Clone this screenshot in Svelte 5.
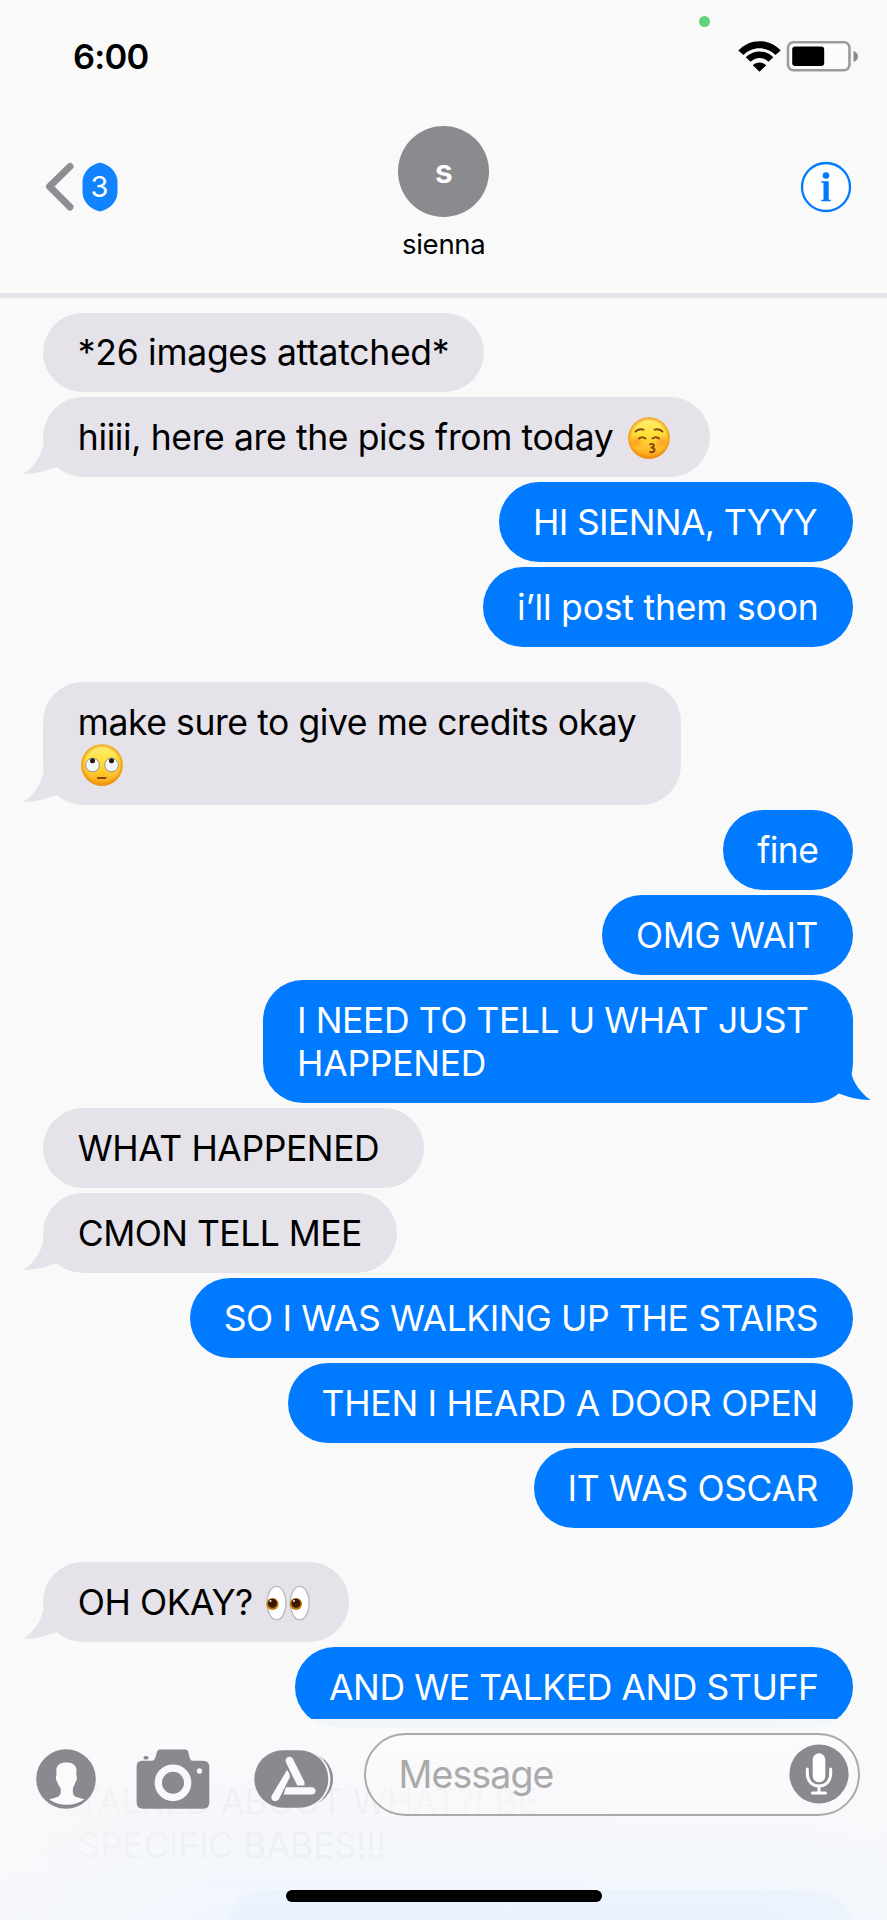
<script>
  const messages = [
    { from: 'them', width: 440.4, lines: [['*26 images attatched*', 371.5]] },
    { from: 'them', width: 666.7, lines: [['hiiii, here are the pics from today', 535.5]], emoji: 'kiss', tail: true },
    { from: 'me', width: 353.7, lines: [['HI SIENNA, TYYY', 284]] },
    { from: 'me', width: 369.7, lines: [['i’ll post them soon', 301.5]] },
    { from: 'them', width: 637.6, lines: [['make sure to give me credits okay', 558.5], ['', 0]], emoji: 'roll', tail: true, gap: true },
    { from: 'me', width: 129.4, lines: [['fine', 61]] },
    { from: 'me', width: 250.7, lines: [['OMG WAIT', 182]] },
    { from: 'me', width: 589.6, lines: [['I NEED TO TELL U WHAT JUST', 511.5], ['HAPPENED', 189]], tail: true },
    { from: 'them', width: 380.4, lines: [['WHAT HAPPENED', 301.5]] },
    { from: 'them', width: 353.9, lines: [['CMON TELL MEE', 284]], tail: true },
    { from: 'me', width: 663, lines: [['SO I WAS WALKING UP THE STAIRS', 594.5]] },
    { from: 'me', width: 565.2, lines: [['THEN I HEARD A DOOR OPEN', 496.5]] },
    { from: 'me', width: 319.2, lines: [['IT WAS OSCAR', 250.5]] },
    { from: 'them', width: 306, lines: [['OH OKAY?', 175]], emoji: 'eyes', tail: true, gap: true },
    { from: 'me', width: 557.7, lines: [['AND WE TALKED AND STUFF', 489.5]] },
    { from: 'them', width: 570, lines: [['TALKED ABOUT WHAT?! BE', 460], ['SPECIFIC BABES!!!', 308]], gap: true },
    { from: 'me', width: 626.7, lines: [['', 0]] },
  ];

  // Tracks a line of text so that it fills the given width.
  function fit(node, width) {
    const count = node.textContent.length;
    if (!count) return;
    const natural = node.getBoundingClientRect().width;
    node.style.letterSpacing = `${(width - natural) / count}px`;
  }
</script>

<div class="phone">
  <header>
    <div class="camera-dot"></div>
    <div class="status">
      <span class="time" use:fit={75.5}>6:00</span>
      <div class="indicators">
        <svg width="43" height="31" viewBox="0 0 43 31">
          <path d="M.3 9.6C12-3 31-3 42.7 9.6L37.5 14C29 5 14 5 5.500 14Z" />
          <path d="M7.700 16.200C15.500 8.500 27.500 8.500 35.300 16.200L30.400 20.700C25.500 15.600 17.500 15.600 12.600 20.700Z" />
          <path d="M14.800 24.200C18.500 20.700 24.500 20.700 28.200 24.200L21.500 30.800Z" />
        </svg>
        <svg width="73" height="31" viewBox="0 0 73 31">
          <rect x="2" y="1.300" width="61.500" height="28" rx="5.500" fill="#fcfcfc" stroke="#9b9b9b" stroke-width="2.600" />
          <rect x="6.200" y="5.500" width="32" height="19.400" rx="3" />
          <path d="M67.500 9.700Q72 12 72 15.500T67.500 21Z" fill="#8a8a8a" />
        </svg>
      </div>
    </div>
    <div class="nav">
      <div class="back">
        <svg width="29" height="50" viewBox="0 0 29 50">
          <path d="M25 4.500L4.500 24.500L25 45" fill="none" stroke="#8e8d93" stroke-width="7" stroke-linecap="round" stroke-linejoin="round" />
        </svg>
        <div class="unread">
          <svg width="36" height="50" viewBox="0 0 36 50">
            <path d="M18 .5C29 3.500 35.500 11 35.500 20V30C35.500 39 29 46.500 18 49.500C7 46.500.5 39 .5 30V20C.5 11 7 3.500 18 .5Z" fill="#1283ff" />
          </svg>
          <span>3</span>
        </div>
      </div>
      <div class="contact">
        <div class="avatar">s</div>
        <div class="name"><span use:fit={83.500}>sienna</span></div>
      </div>
      <svg class="info" width="52" height="52" viewBox="0 0 52 52">
        <circle cx="26" cy="26" r="24" fill="#fdfdfd" stroke="#007aff" stroke-width="2.300" />
        <circle cx="26" cy="14.500" r="3.300" fill="#007aff" />
        <path d="M21.300 20.300H28.700V38.700H30.700V40.200H21.300V38.700H23.500V21.800H21.300Z" fill="#007aff" />
      </svg>
    </div>
  </header>

  <main>
    {#each messages as m}
      <div class="bubble {m.from}" class:gap={m.gap} style:width="{m.width}px">
        {#each m.lines as [text, width], i}
          <div class="line">
            <span use:fit={width}>{text}</span>
            {#if m.emoji && i === m.lines.length - 1}
              {#if m.emoji === 'eyes'}
                <svg class="emoji eyes" width="44" height="36" viewBox="0 0 44 36">
                  <g fill="#fff" stroke="#bcbabd" stroke-width="1.300">
                    <ellipse cx="10.500" cy="18" rx="9.500" ry="16.700" />
                    <ellipse cx="33.700" cy="18" rx="9.500" ry="16.700" />
                  </g>
                  <g fill="#b97a08"><circle cx="6.500" cy="19" r="6.100" /><circle cx="30" cy="19" r="6.100" /></g>
                  <g fill="#3a1700"><circle cx="6.500" cy="18.200" r="4.500" /><circle cx="30" cy="18.200" r="4.500" /></g>
                  <g fill="#fff"><circle cx="4.500" cy="16" r="1" /><circle cx="28" cy="16" r="1" /></g>
                </svg>
              {:else}
                <svg class="emoji {m.emoji}" width="42" height="42" viewBox="0 0 42 42">
                  <defs>
                    <linearGradient id="face-{m.emoji}" x1="0" y1="0" x2="0" y2="1">
                      <stop offset="0" stop-color="#ffef7a" />
                      <stop offset=".4" stop-color="#ffe03a" />
                      <stop offset=".75" stop-color="#ffc12a" />
                      <stop offset="1" stop-color="#f59a12" />
                    </linearGradient>
                    <radialGradient id="rim-{m.emoji}">
                      <stop offset=".8" stop-color="#ee8b10" stop-opacity="0" />
                      <stop offset="1" stop-color="#e98509" stop-opacity=".8" />
                    </radialGradient>
                    <radialGradient id="blush-{m.emoji}">
                      <stop offset="0" stop-color="#ff7a1c" stop-opacity=".6" />
                      <stop offset="1" stop-color="#ff7a1c" stop-opacity="0" />
                    </radialGradient>
                  </defs>
                  <circle cx="21" cy="21" r="20.800" fill="url(#face-{m.emoji})" />
                  <circle cx="21" cy="21" r="20.800" fill="url(#rim-{m.emoji})" />
                  {#if m.emoji === 'kiss'}
                    <circle cx="8" cy="25" r="7.500" fill="url(#blush-kiss)" />
                    <circle cx="34" cy="25" r="7.500" fill="url(#blush-kiss)" />
                    <g fill="none" stroke="#85480a" stroke-width="1.900" stroke-linecap="round" stroke-linejoin="round">
                      <path d="M7.500 14.500Q11 11.300 15.500 12.700M26.500 12.700Q31 11.300 34.500 14.500" />
                      <path d="M11 21.500Q14 18.800 17.500 21.500M24.500 21.500Q28 18.800 31 21.500" />
                      <path d="M22 27.300C25.500 26 28 29 23.500 30.500C29 31.500 26.500 36 22 35" />
                    </g>
                  {:else}
                    <g fill="#f7f8fa" stroke="#8c9299" stroke-width="1">
                      <circle cx="11.500" cy="21" r="6.800" /><circle cx="30.500" cy="21" r="6.800" />
                    </g>
                    <circle cx="11.500" cy="16.800" r="2.500" fill="#251408" />
                    <circle cx="30.500" cy="16.800" r="2.500" fill="#251408" />
                    <rect x="16" y="33" width="9.500" height="2" rx="1" fill="#85480a" />
                  {/if}
                </svg>
              {/if}
            {/if}
          </div>
        {/each}
        {#if m.tail}
          <svg class="tail" width="38" height="32" viewBox="0 0 38 32">
            <path d="M20 0C18.500 12 8 24 .5 29C12 29 24 26 36 21L38 0Z" fill="currentColor" />
          </svg>
        {/if}
      </div>
    {/each}
  </main>

  <footer>
    <div class="composer">
      <svg width="60" height="60" viewBox="0 0 60 60">
        <circle cx="30" cy="30" r="29.800" fill="#8a898f" />
        <path d="M30.500 13.500C36 13 40 16 40.500 20.500L40.300 26C41.500 27.500 41 31.500 39.500 33C38.800 36 37.300 37.500 37 39C36.500 44 37 46.500 40 47.700C43 49 46 49.300 48.300 50.500C38 57.500 23 57.500 13.300 50.500C16 49.300 19 49 22 47.700C25 46.500 25 43 24.500 39C23.500 37.500 22 36 21.300 33C19.800 31.500 19.500 27.500 20.500 26L20.300 20.500C21 15.500 25 13.300 30.500 13.500Z" fill="#fbfbfc" />
      </svg>
      <svg width="74" height="60" viewBox="0 0 74 60">
        <path d="M6 11.800H15C17 11.800 18.500 11.200 19.200 9L21 2.800C21.500 1 22.500.5 24.500.5H48.500C50.500.5 51.700 1 52.200 2.800L53.700 9C54.400 11.200 55.500 11.800 57.500 11.800H67Q73.300 11.800 73.300 18V53.500Q73.300 59.700 67 59.700H7Q.6 59.700.6 53.500V18Q.6 11.800 6 11.800Z" fill="#8a898f" />
        <rect x="7.500" y="7" width="5" height="3.400" rx="1.700" fill="#8a898f" />
        <circle cx="37" cy="33.800" r="14.700" fill="none" stroke="#f9f9fb" stroke-width="7.300" />
        <circle cx="63.500" cy="22" r="2.700" fill="#fafafb" />
      </svg>
      <svg width="80" height="60" viewBox="0 0 80 60">
        <rect x="8" y="4" width="71" height="52" rx="26" fill="#8a898f" />
        <rect x="2" y="1" width="74.500" height="58" rx="29" fill="#f7f8fa" />
        <rect x=".3" y="1.200" width="74" height="57.500" rx="28.700" fill="#8a898f" />
        <g fill="#f9fafb">
          <path d="M32 13.500C29.800 8.500 36.800 5.500 39 10L50.500 33V36.500H43.300Z" />
          <path d="M33 21C35 23 36 26 35.700 28.500L25 50C22 54.500 15.500 51 17.800 46.500Z" />
          <path d="M32 38.200H57.500C63 38.200 63 45.500 57.500 45.500H29.500Z" />
        </g>
      </svg>
      <div class="input">
        <span use:fit={155}>Message</span>
        <svg width="60" height="60" viewBox="0 0 60 60">
          <circle cx="30" cy="30" r="29.600" fill="#8a898f" />
          <rect x="23.700" y="9.300" width="12.600" height="29" rx="6.300" fill="#fff" />
          <path d="M18.300 25V29C18.300 37 23 42 30 42S41.700 37 41.700 29V25M30 42V49M23.500 49H36.500" fill="none" stroke="#fff" stroke-width="3" stroke-linecap="round" />
        </svg>
      </div>
    </div>
    <div class="home"></div>
  </footer>
</div>

<style>
  :global(body) { background: #f9f9f9; }
  .phone {
    position: relative;
    width: 887px;
    height: 1920px;
    overflow: hidden;
    background: #f9f9f9;
    font-family: Inter, "Liberation Sans", sans-serif;
    color: #000;
  }
  svg { display: block; flex: none; }
  span { white-space: nowrap; }
  header {
    box-sizing: border-box;
    height: 298px;
    border-bottom: 5px solid #e4e4ea;
    display: flex;
    flex-direction: column;
  }
  .camera-dot {
    width: 11px;
    height: 11px;
    margin: 16px 0 0 699px;
    border-radius: 50%;
    background: #5ed37b;
  }
  .status {
    display: flex;
    justify-content: space-between;
    margin: 14px 28px 0 73px;
    height: 32px;
  }
  .time { font-size: 34.500px; font-weight: 600; line-height: 32px; }
  .indicators { display: flex; gap: 5px; }
  .nav {
    display: grid;
    grid-template-columns: 1fr 120px 1fr;
    margin-top: 53px;
    padding: 0 35.500px 0 45px;
  }
  .back { display: flex; gap: 7.500px; margin-top: 35.500px; }
  .unread { display: grid; place-items: center; width: 36px; height: 50px; }
  .unread > * { grid-area: 1 / 1; }
  .unread span { color: #fff; font-size: 29px; line-height: 50px; }
  .contact { display: flex; flex-direction: column; align-items: center; margin-left: -9px; }
  .avatar {
    width: 91px;
    height: 91px;
    border-radius: 50%;
    background: #8b8a8f;
    color: #fff;
    font-size: 33px;
    font-weight: 600;
    line-height: 91px;
    text-align: center;
  }
  .name { margin-top: 11px; font-size: 27.500px; line-height: 32px; }
  .info { justify-self: end; margin-top: 34.500px; }

  main {
    display: flex;
    flex-direction: column;
    gap: 4.950px;
    padding: 14.500px 34.300px 0 43.300px;
  }
  .bubble {
    position: relative;
    box-sizing: border-box;
    padding: 18.850px 35px 17.850px 34.500px;
    border-radius: 40px;
    font-size: 35.500px;
    line-height: 43.300px;
  }
  .them { align-self: flex-start; background: #e5e2ea; color: #000; }
  .me { align-self: flex-end; background: #007aff; color: #fff; padding-left: 34px; }
  .gap { margin-top: 29.500px; }
  .line { display: flex; align-items: center; height: 43.300px; }
  .emoji.kiss { margin-left: 15px; }
  .emoji.roll { margin: 0 0 1px 3.500px; }
  .emoji.eyes { margin-left: 13px; }
  .tail { position: absolute; bottom: 0; }
  .them .tail { left: -20px; color: #e5e2ea; }
  .me .tail { right: -18.500px; transform: scaleX(-1); color: #007aff; }

  footer {
    position: absolute;
    left: 0;
    right: 0;
    bottom: 0;
    height: 201px;
    background:
      linear-gradient(90deg, rgba(249, 249, 249, .6), rgba(249, 249, 249, 0) 25%, rgba(249, 249, 249, 0) 85%, rgba(249, 249, 249, .3)),
      linear-gradient(rgba(250, 250, 251, .97), rgba(246, 248, 251, .97) 55%, rgba(241, 246, 254, .97));
  }
  .composer {
    display: grid;
    grid-template-columns: 60px 74px 80px 496px;
    align-items: center;
    justify-content: space-between;
    margin: 13px 27px 0 36px;
    height: 84px;
  }
  .composer > svg { margin-top: 10px; }
  .composer > svg:nth-child(2) { margin-left: 1.500px; }
  .composer > svg:nth-child(3) { margin-left: 8px; }
  .input {
    box-sizing: border-box;
    display: flex;
    align-items: center;
    justify-content: space-between;
    height: 83px;
    padding: 0 9px 0 32.500px;
    border: 2px solid #aaa;
    border-radius: 42px;
    background: rgba(252, 252, 253, .35);
    color: #aaa;
    font-size: 37.500px;
  }
  .home {
    width: 316px;
    height: 12px;
    margin: 74px 0 0 286px;
    border-radius: 6px;
    background: #000;
  }
</style>
